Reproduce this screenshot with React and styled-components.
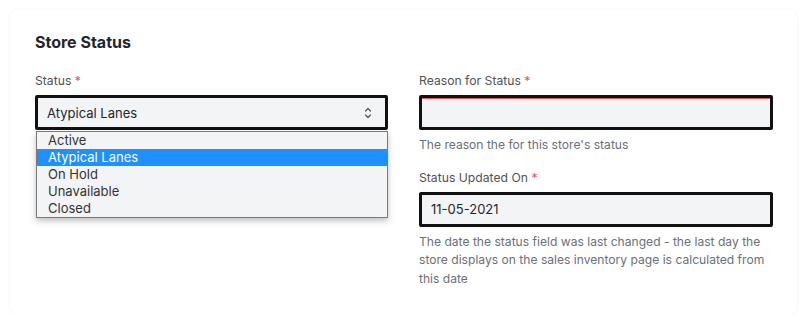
import React from 'react';
import styled, { createGlobalStyle } from 'styled-components';

const GlobalStyle = createGlobalStyle`
  body {
    margin: 0;
    background: #ffffff;
    font-family: Inter, "Noto Sans", sans-serif;
  }
`;

const Card = styled.section`
  margin: 10px 10px 0 10px;
  width: 787px;
  box-sizing: border-box;
  padding: 22px 24px 26px 25px;
  background: #fff;
  border-radius: 8px;
  box-shadow: 0 0 3px rgba(0, 0, 0, 0.07);
`;

const Title = styled.h2`
  margin: 0 0 21px 0;
  font-size: 16px;
  line-height: 20px;
  font-weight: 700;
  color: #1f272e;
`;

const Grid = styled.div`
  display: grid;
  grid-template-columns: 353px 354px;
  column-gap: 31px;
`;

const Column = styled.div`
  display: flex;
  flex-direction: column;
`;

const Field = styled.div`
  position: relative;
  display: flex;
  flex-direction: column;
  margin-bottom: ${(p) => p.$gap || 0}px;
`;

const Label = styled.label`
  font-size: 12.2px;
  line-height: 16px;
  color: #525252;
  margin-bottom: 6px;
`;

const Req = styled.span`
  color: #e24c4c;
`;

const Box = styled.div`
  position: relative;
  height: 35px;
  box-sizing: border-box;
  display: flex;
  align-items: center;
  justify-content: space-between;
  padding: 0 12px 0 9px;
  background: #f3f4f6;
  border: 3px solid #111;
  border-radius: 2px;
  font-size: 13px;
  color: #1f272e;
  box-shadow: ${(p) => (p.$error ? 'inset 0 1px 0 #e05a5a' : 'none')};
`;

const Menu = styled.ul`
  position: absolute;
  top: 33px;
  left: -2px;
  right: -3px;
  margin: 0;
  padding: 0;
  list-style: none;
  background: #f3f4f6;
  border: 1px solid #7a7a7a;
  box-shadow: 0 3px 6px rgba(0, 0, 0, 0.25);
  z-index: 2;
`;

const Option = styled.li`
  height: 17px;
  line-height: 17px;
  padding: 0 11px;
  font-size: 13px;
  color: ${(p) => (p.$active ? '#fff' : '#333')};
  background: ${(p) => (p.$active ? '#1e90ff' : 'transparent')};
`;

const Help = styled.p`
  margin: 6px 0 0 0;
  font-size: 12.1px;
  line-height: 18.5px;
  color: #6b6f76;
`;

const Chevrons = () => (
  <svg width="10" height="14" viewBox="0 0 10 14" fill="none" stroke="#555" strokeWidth="1.2" strokeLinecap="round" strokeLinejoin="round">
    <path d="M2.5 5 L5 2.5 L7.5 5" />
    <path d="M2.5 9 L5 11.5 L7.5 9" />
  </svg>
);

const options = ['Active', 'Atypical Lanes', 'On Hold', 'Unavailable', 'Closed'];

export default function App() {
  return (
    <>
      <GlobalStyle />
      <Card>
        <Title>Store Status</Title>
        <Grid>
          <Column>
            <Field>
              <Label>
                Status <Req>*</Req>
              </Label>
              <Box>
                <span>Atypical Lanes</span>
                <Chevrons />
                <Menu>
                  {options.map((o) => (
                    <Option key={o} $active={o === 'Atypical Lanes'}>
                      {o}
                    </Option>
                  ))}
                </Menu>
              </Box>
            </Field>
          </Column>
          <Column>
            <Field $gap={15}>
              <Label>
                Reason for Status <Req>*</Req>
              </Label>
              <Box $error />
              <Help>The reason the for this store's status</Help>
            </Field>
            <Field>
              <Label>
                Status Updated On <Req>*</Req>
              </Label>
              <Box>
                <span>11-05-2021</span>
              </Box>
              <Help>
                The date the status field was last changed - the last day the store displays on the sales
                inventory page is calculated from this date
              </Help>
            </Field>
          </Column>
        </Grid>
      </Card>
    </>
  );
}
